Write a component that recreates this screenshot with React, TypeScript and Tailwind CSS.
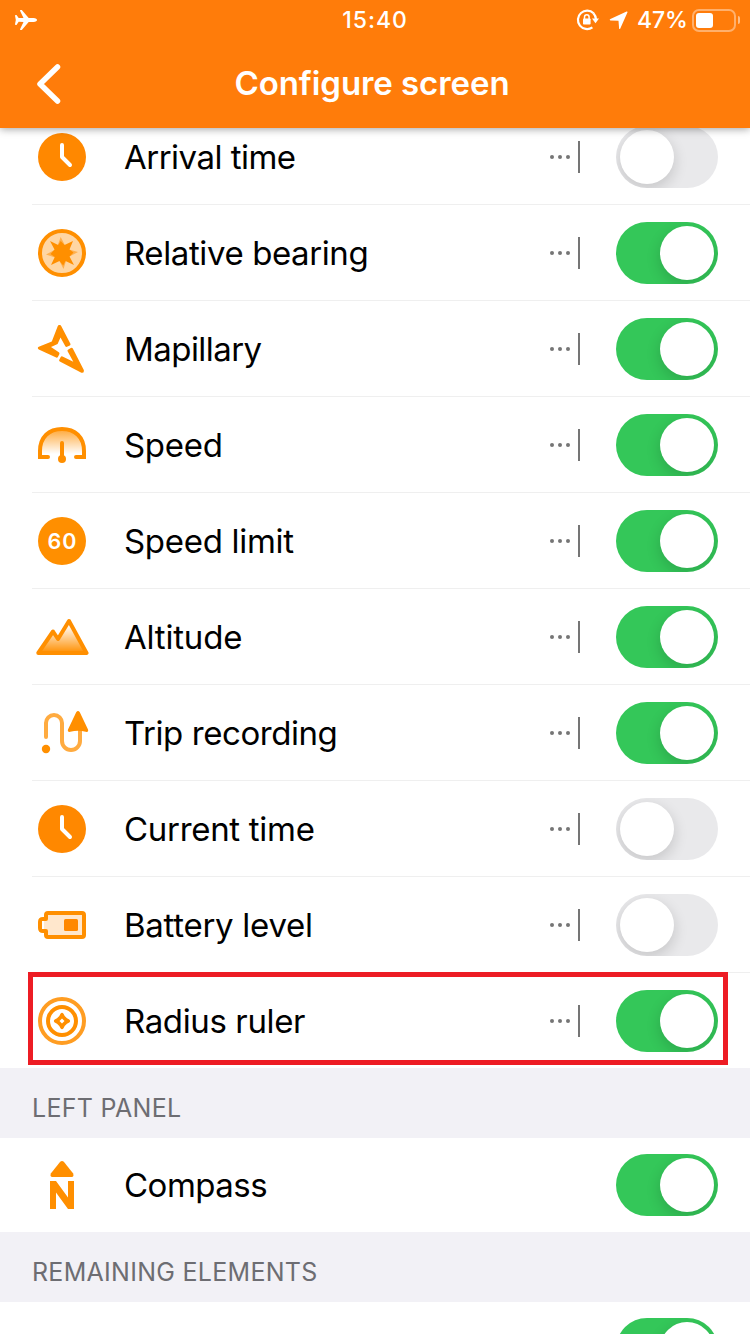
import type { ReactNode } from "react";

const ORANGE = "#ff8f00";

function ClockIcon() {
  return (
    <svg width="54" height="48" viewBox="0 0 54 48" fill="none">
      <circle cx="27" cy="24" r="24" fill="#ff8800" />
      <path d="M27 12V24L35 32" stroke="#fff" strokeWidth="4" strokeLinecap="round" strokeLinejoin="round" />
    </svg>
  );
}

function BearingIcon() {
  return (
    <svg width="54" height="48" viewBox="0 0 54 48">
      <circle cx="27" cy="24" r="22" fill="#ffd6a3" stroke={ORANGE} strokeWidth="4" />
      <path d="M25.7 8L29.8 16L27 24L22.8 16ZM43 23L34.5 27.5L27 24L34 20.5ZM28.5 40L24.5 32L27 24L31 32ZM11 25.5L19.5 21L27 24L20 28.5Z" fill="#ffb04d" />
      <path d="M25.7 12L29.5 16L38 12L34.5 20.5L38.5 23.5L34.5 27.5L39 36L30.5 32L28.2 36.5L24.5 32L16 36L19.8 28L15.5 25L19.5 20.5L15 12L23.2 16Z" fill={ORANGE} />
    </svg>
  );
}

function MapillaryIcon() {
  return (
    <svg width="54" height="48" viewBox="0 0 54 48" fill={ORANGE}>
      <path d="M22.8 1Q24.5 -1.6 26.2 1L35.4 18.7Q35.8 19.8 34.8 20.5L32 21.8Q30.8 22.2 30.2 21L25.5 12.5L22.6 19L16 22L23.8 27.3Q24.8 28 24.3 29.2L22.9 32Q22.2 33 21.2 32.5L3.8 24.5Q1.8 22.8 3.8 21.7L16.8 16.4Z" />
      <path d="M33 24.7L35.8 23Q37 22.4 37.8 23.5L48.8 45Q49.4 48.2 46.4 47.8L24.8 36.4Q23.8 35.8 24.3 34.7L25.7 32Q26.4 30.9 27.5 31.5L38.3 36.8L32.6 26.2Q32.2 25.3 33 24.7Z" />
    </svg>
  );
}

function SpeedIcon() {
  return (
    <svg width="54" height="48" viewBox="0 0 54 48" fill="none">
      <defs>
        <linearGradient id="speedFill" x1="0" y1="6" x2="0" y2="36" gradientUnits="userSpaceOnUse">
          <stop stopColor={ORANGE} stopOpacity="0.85" />
          <stop offset="0.9" stopColor={ORANGE} stopOpacity="0" />
        </linearGradient>
      </defs>
      <path d="M5 36V30C5 16 14 8 27 8S49 16 49 30V36Z" fill="url(#speedFill)" />
      <path d="M13 36H5V30C5 16 14 8 27 8S49 16 49 30V36H41" stroke={ORANGE} strokeWidth="4" strokeLinecap="round" />
      <path d="M27 22V36" stroke={ORANGE} strokeWidth="4" strokeLinecap="round" />
      <circle cx="27" cy="38" r="4" fill={ORANGE} />
    </svg>
  );
}

function LimitIcon() {
  return (
    <span className="ml-[3px] flex size-12 items-center justify-center rounded-full bg-[#ff8f00] pl-px pt-px text-[21.5px] font-semibold tracking-[1px] text-white">
      60
    </span>
  );
}

function AltitudeIcon() {
  return (
    <svg width="54" height="48" viewBox="0 0 54 48" fill="none">
      <defs>
        <linearGradient id="peakFill" x1="0" y1="12" x2="0" y2="40" gradientUnits="userSpaceOnUse">
          <stop stopColor={ORANGE} stopOpacity="0" />
          <stop offset="1" stopColor={ORANGE} />
        </linearGradient>
      </defs>
      <path d="M3.3 40L18 18.5L23 26L34 8L51.5 40Z" fill="url(#peakFill)" stroke={ORANGE} strokeWidth="4" strokeLinejoin="round" />
    </svg>
  );
}

function TripIcon() {
  return (
    <svg width="54" height="48" viewBox="0 0 54 48" fill="none">
      <path d="M11 28V14A8 8 0 0 1 27 14V32A9 9 0 0 0 45 32V18" stroke="#ffab40" strokeWidth="4" strokeLinecap="round" />
      <circle cx="11" cy="40" r="4.2" fill={ORANGE} />
      <path d="M41.2 3.2Q43 .8 44.8 3.2L53 20.5Q53.8 23.5 50.7 22.8Q43 20.5 35.3 22.8Q32.2 23.3 33 20.5Z" fill={ORANGE} />
    </svg>
  );
}

function BatteryIcon() {
  return (
    <svg width="54" height="48" viewBox="0 0 54 48" fill="none">
      <path d="M13 12H47Q49 12 49 14V34Q49 36 47 36H13Q11 36 11 34V14Q11 12 13 12Z" fill="#ffe7cc" />
      <path d="M11 18V14Q11 12 13 12H47Q49 12 49 14V34Q49 36 47 36H13Q11 36 11 34V30H8Q5 30 5 27V21Q5 18 8 18Z" stroke={ORANGE} strokeWidth="4" strokeLinejoin="round" />
      <path d="M7 20H13V28H7Z" fill="#fff" />
      <path d="M9 20H13V28H9Z" fill="#ffe7cc" />
      <rect x="29" y="18" width="14" height="12" rx="1.5" fill="#ff8800" />
    </svg>
  );
}

function RadiusIcon() {
  return (
    <svg width="54" height="48" viewBox="0 0 54 48" fill="none">
      <circle cx="27" cy="24" r="22" stroke="#ff9d22" strokeWidth="4" />
      <circle cx="27" cy="24" r="14" stroke={ORANGE} strokeWidth="4" />
      <path
        d="M25.5 16.7Q27 15 28.5 16.7L29.7 19L32 21.3L34.3 22.5Q36 24 34.3 25.5L32 26.7L29.7 29L28.5 31.3Q27 33 25.5 31.3L24.3 29L22 26.7L19.7 25.5Q18 24 19.7 22.5L22 21.3L24.3 19ZM27 21.5L24.5 24L27 26.5L29.5 24Z"
        fill={ORANGE}
        fillRule="evenodd"
      />
    </svg>
  );
}

function CompassIcon() {
  return (
    <svg width="54" height="48" viewBox="0 0 54 48" fill={ORANGE}>
      <path d="M25.2 .8Q27 -.8 28.8 .8L38.2 12.5Q39 16 37 16H17Q15 16 15.8 12.5Z" />
      <path d="M15 20H21L33 36.5V20H39V48H33L21 31.5V48H15Z" />
    </svg>
  );
}

function Toggle({ on }: { on: boolean }) {
  return (
    <span
      className={
        on
          ? "mr-8 flex h-[62px] w-[102px] shrink-0 justify-end overflow-hidden rounded-full bg-[#34c759] p-1"
          : "mr-8 flex h-[62px] w-[102px] shrink-0 justify-start overflow-hidden rounded-full bg-[#e9e9eb] p-1"
      }
    >
      <span className="size-[54px] rounded-full bg-white shadow-[0_5px_14px_1px_rgba(0,0,0,0.14)]" />
    </span>
  );
}

function WidgetHint() {
  return (
    <span className="mr-9 flex h-8 items-center">
      <svg width="20" height="4" viewBox="0 0 20 4" fill="#757575">
        <circle cx="2" cy="2" r="2" />
        <circle cx="10" cy="2" r="2" />
        <circle cx="18" cy="2" r="2" />
      </svg>
      <span className="ml-2 h-8 w-0.5 bg-[#757575]" />
    </span>
  );
}

interface RowProps {
  icon: ReactNode;
  label: string;
  spacing: string;
  on: boolean;
  hint?: boolean;
}

function RowContent({ icon, label, spacing, on, hint }: RowProps) {
  return (
    <>
      <span className="ml-[3px] flex w-[54px] shrink-0 items-center">{icon}</span>
      <span className={`ml-[35px] grow whitespace-nowrap text-[33px] leading-10 text-black ${spacing}`}>{label}</span>
      {hint && <WidgetHint />}
      <Toggle on={on} />
    </>
  );
}

const widgets: RowProps[] = [
  { icon: <ClockIcon />, label: "Arrival time", spacing: "tracking-[-0.52px]", on: false },
  { icon: <BearingIcon />, label: "Relative bearing", spacing: "tracking-[-0.4px]", on: true },
  { icon: <MapillaryIcon />, label: "Mapillary", spacing: "tracking-[-0.55px]", on: true },
  { icon: <SpeedIcon />, label: "Speed", spacing: "tracking-[-0.3px]", on: true },
  { icon: <LimitIcon />, label: "Speed limit", spacing: "tracking-[-0.3px]", on: true },
  { icon: <AltitudeIcon />, label: "Altitude", spacing: "tracking-[-0.2px]", on: true },
  { icon: <TripIcon />, label: "Trip recording", spacing: "tracking-[-0.43px]", on: true },
  { icon: <ClockIcon />, label: "Current time", spacing: "tracking-[-0.3px]", on: false },
  { icon: <BatteryIcon />, label: "Battery level", spacing: "tracking-[-0.28px]", on: false },
];

function StatusBar() {
  return (
    <div className="grid h-10 grid-cols-3 items-center text-[23px] font-medium text-white">
      <svg className="ml-[15px]" width="22" height="20" viewBox="0 0 22 20" fill="#fff">
        <path d="M0 5.5Q0 5 .8 5H1.5L3.7 8H8.5L5 .8Q4.8 0 5.6 0H6.8L13.7 8H18.5Q22 8.5 22 10T18.5 12H13.7L6.8 20H5.6Q4.8 20 5 19.2L8.5 12L3.7 11.8L1.5 15H.8Q0 15 0 14.3L.8 10Z" />
      </svg>
      <span className="text-center tracking-[1px]">15:40</span>
      <div className="flex items-center justify-end pr-[10px]">
        <svg width="24" height="22" viewBox="0 0 24 22" fill="none">
          <path d="M17.6 4.3A9.2 9.2 0 1 0 16.4 18.4" stroke="#fff" strokeWidth="2.2" />
          <path d="M17.4 4.2Q19.8 6.8 19.9 10" stroke="#fff" strokeWidth="2.2" />
          <path d="M16 9.5H23L19.5 14.2Z" fill="#fff" />
          <rect x="7" y="9.5" width="7.6" height="6" rx="0.8" fill="#fff" />
          <path d="M8.5 10V8A2.3 2.3 0 0 1 13.1 8V10" stroke="#fff" strokeWidth="1.5" />
        </svg>
        <svg className="ml-[9px]" width="20" height="20" viewBox="0 0 20 20" fill="#fff">
          <path d="M17.6 1.6Q18.9 1.2 18.4 2.6L11.3 18.4Q10.6 19.6 10.1 18.4L9.5 10.8L1.4 10.4Q-.1 9.9 1.4 9.1Z" />
        </svg>
        <span className="ml-2 w-[52px] whitespace-nowrap tracking-[-0.1px]">47%</span>
        <span className="ml-[3px] flex h-[23px] w-11 rounded-[7px] border-2 border-white/40 p-0.5">
          <span className="h-[15px] w-[17px] rounded-[3px] bg-white" />
        </span>
        <span className="ml-0.5 h-2 w-0.5 rounded-r-full bg-white/50" />
      </div>
    </div>
  );
}

export default function App() {
  return (
    <div className="flex h-[1334px] w-[750px] flex-col overflow-hidden bg-white font-['Inter',sans-serif]">
      <header className="z-10 h-32 shrink-0 bg-[#ff7c0a] shadow-[0_1px_8px_rgba(0,0,0,0.38)]">
        <StatusBar />
        <div className="grid h-[88px] grid-cols-[100px_1fr_100px] items-center">
          <svg className="ml-[36px]" width="26" height="42" viewBox="0 0 26 42" fill="none">
            <path d="M21.5 4L4 21L21.5 38" stroke="#fff" strokeWidth="5.5" strokeLinecap="round" strokeLinejoin="round" />
          </svg>
          <h1 className="pr-[6px] text-center text-[33px] font-semibold tracking-[-0.07px] text-white">Configure screen</h1>
        </div>
      </header>

      <main className="-mt-[19px] shrink-0">
        <ul>
          {widgets.map((w) => (
            <li key={w.label} className="ml-8 flex h-24 items-center border-b border-[#efefef]">
              <RowContent {...w} hint />
            </li>
          ))}
          <li className="relative ml-8 flex h-[95px] items-center">
            <RowContent icon={<RadiusIcon />} label="Radius ruler" spacing="tracking-[-0.38px]" on hint />
            <span className="absolute -left-1 -top-px h-[93px] w-[700px] border-[5px] border-[#ed1c24]" />
          </li>
        </ul>
        <h2 className="flex h-[70px] items-center bg-[#f2f1f6] pl-8 pt-3 text-[25px] tracking-[0.3px] text-[#6d6d72]">LEFT PANEL</h2>
        <div className="ml-8 flex h-[94px] items-center">
          <RowContent icon={<CompassIcon />} label="Compass" spacing="tracking-[-0.5px]" on />
        </div>
        <h2 className="flex h-[70px] items-center bg-[#f2f1f6] pl-8 pt-3 text-[25px] tracking-[0.28px] text-[#6d6d72]">REMAINING ELEMENTS</h2>
        <div className="ml-8 flex h-[94px] items-center justify-end">
          <Toggle on />
        </div>
      </main>
    </div>
  );
}
